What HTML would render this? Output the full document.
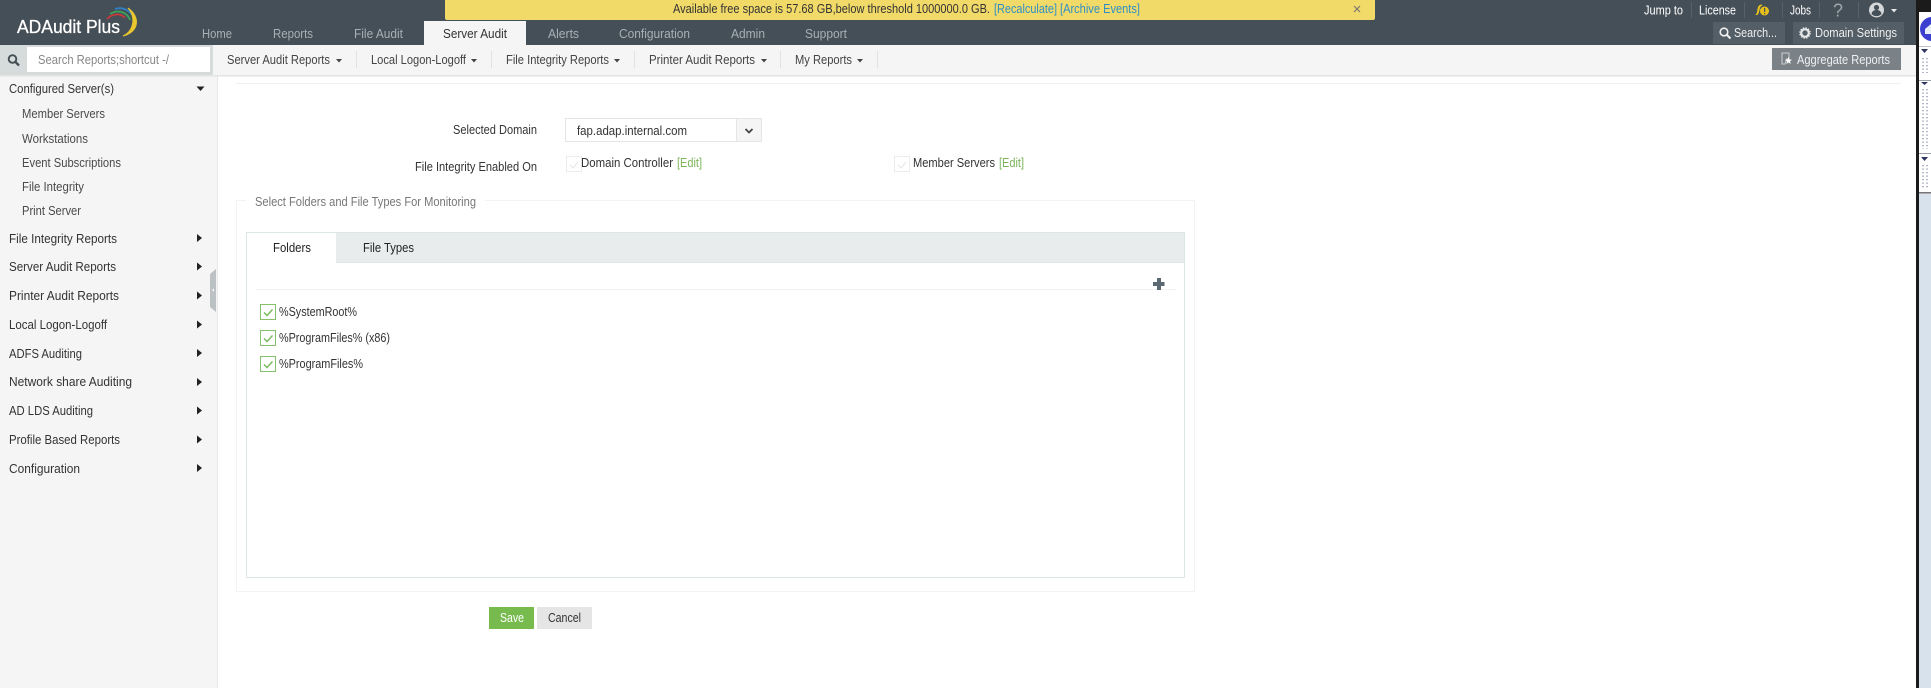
<!DOCTYPE html>
<html>
<head>
<meta charset="utf-8">
<title>ADAudit Plus</title>
<style>
html,body{margin:0;padding:0;background:#fff;width:1931px;height:688px;overflow:hidden}
svg{display:block}
text{font-family:"Liberation Sans",sans-serif;font-size:12px;fill:#3c3c3c;white-space:pre}
.nav{fill:#a8b0b5;font-size:13px}
.top{fill:#fff;font-size:13px}
.btn{fill:#eef0f1;font-size:13px}
.menu{fill:#444;font-size:13px}
.side{fill:#333;font-size:13px}
.sub{fill:#4a4a4a;font-size:13px}
.f{fill:#333;font-size:13px}
.link{fill:#2f8fc4}
.edit{fill:#7cb45a}
</style>
</head>
<body>
<svg xmlns="http://www.w3.org/2000/svg" width="1931" height="688" viewBox="0 0 1931 688">
<rect width="1931" height="688" fill="#fff"/>

<!-- header -->
<rect x="0" y="0" width="1916" height="45" fill="#454f57"/>
<path d="M445 0H1375V18a2 2 0 0 1-2 2H447a2 2 0 0 1-2-2Z" fill="#f2da69"/>
<text x="673" y="13" font-size="12" textLength="317" lengthAdjust="spacingAndGlyphs" style="fill:#333;font-size:12.500px">Available free space is 57.68 GB,below threshold 1000000.0 GB.</text>
<text x="994" y="13" class="link" textLength="63" lengthAdjust="spacingAndGlyphs" style="font-size:12.500px">[Recalculate]</text>
<text x="1060" y="13" class="link" textLength="80" lengthAdjust="spacingAndGlyphs" style="font-size:12.500px">[Archive Events]</text>
<path d="M1354 6l6 6M1360 6l-6 6" stroke="#777" stroke-width="1.200" fill="none"/>

<!-- logo -->
<text x="17" y="33" style="fill:#fff;stroke:#fff;stroke-width:.3px;font-size:18.500px" textLength="103" lengthAdjust="spacingAndGlyphs">ADAudit Plus</text>
<path d="M107 19C113 13 121 13 125 18" stroke="#c8393c" stroke-width="1.800" fill="none"/>
<path d="M110 14C118 9 127 12 130 20" stroke="#3aa35a" stroke-width="1.800" fill="none"/>
<path d="M115 9C124 6 133 12 135 22" stroke="#2f7fc4" stroke-width="1.800" fill="none"/>
<path d="M128 8C140 16 140 32 123 36C134 31 136 17 128 8Z" stroke="#eac62f" stroke-width="1" fill="#eac62f"/>

<!-- nav tabs -->
<rect x="424" y="21" width="102" height="24" fill="#f5f5f5"/>
<text x="202" y="38" class="nav" textLength="30" lengthAdjust="spacingAndGlyphs">Home</text>
<text x="273" y="38" class="nav" textLength="40" lengthAdjust="spacingAndGlyphs">Reports</text>
<text x="354" y="38" class="nav" textLength="49" lengthAdjust="spacingAndGlyphs">File Audit</text>
<text x="443" y="38" class="f" textLength="64" lengthAdjust="spacingAndGlyphs">Server Audit</text>
<text x="548" y="38" class="nav" textLength="31" lengthAdjust="spacingAndGlyphs">Alerts</text>
<text x="619" y="38" class="nav" textLength="71" lengthAdjust="spacingAndGlyphs">Configuration</text>
<text x="731" y="38" class="nav" textLength="34" lengthAdjust="spacingAndGlyphs">Admin</text>
<text x="805" y="38" class="nav" textLength="42" lengthAdjust="spacingAndGlyphs">Support</text>

<!-- top right -->
<text x="1644" y="14.500" class="top" textLength="39" lengthAdjust="spacingAndGlyphs">Jump to</text>
<text x="1699" y="14.500" class="top" textLength="37" lengthAdjust="spacingAndGlyphs">License</text>
<text x="1790" y="14.500" class="top" textLength="21" lengthAdjust="spacingAndGlyphs">Jobs</text>
<g stroke="#57616a" stroke-width="1"><path d="M1691.500 2V18M1744.500 2V18M1782.500 2V18M1819.500 2V18M1858.500 2V18"/></g>
<path d="M1755 15c2-1 2-3 2.500-6 .5-3 2-4.500 4-4.500l1 1c-2 .5-2.500 2-3 4.500-.5 2.500-1 4-2 5Z" fill="#e6bf1c"/>
<circle cx="1764.500" cy="11" r="4.500" fill="#e6bf1c"/>
<rect x="1764" y="8" width="1.200" height="4" fill="#454f57"/><rect x="1764" y="13" width="1.200" height="1.200" fill="#454f57"/>
<text x="1833" y="16.500" style="fill:#a0a7ac;font-size:18px" textLength="10" lengthAdjust="spacingAndGlyphs">?</text>
<circle cx="1876.500" cy="10" r="7.500" fill="#d5d8da"/>
<circle cx="1876.500" cy="7.500" r="2.600" fill="#454f57"/>
<path d="M1871.500 14c.5-3 2.500-4 5-4s4.500 1 5 4a7 7 0 0 1-10 0Z" fill="#454f57"/>
<path d="M1891 9h6l-3 3.500Z" fill="#e8eaeb"/>

<!-- header buttons -->
<rect x="1713" y="22" width="72" height="22" fill="#545e66"/>
<rect x="1793" y="22" width="111" height="22" fill="#545e66"/>
<circle cx="1724" cy="32" r="3.800" fill="none" stroke="#f0f0f0" stroke-width="1.600"/>
<path d="M1727 35l3.500 3.500" stroke="#f0f0f0" stroke-width="2"/>
<text x="1734" y="37" class="btn" textLength="43" lengthAdjust="spacingAndGlyphs">Search...</text>
<circle cx="1805" cy="33" r="3.800" fill="none" stroke="#e6e8e9" stroke-width="2.200"/>
<circle cx="1805" cy="33" r="5.300" fill="none" stroke="#e6e8e9" stroke-width="1" stroke-dasharray="1.500 1.300"/>
<text x="1815" y="37" class="btn" textLength="82" lengthAdjust="spacingAndGlyphs">Domain Settings</text>

<!-- sub bar -->
<rect x="0" y="45" width="1916" height="30" fill="#f5f5f5"/>
<rect x="0" y="75" width="1916" height="1.500" fill="#e4e4e4"/>
<rect x="0" y="45" width="213" height="30" fill="#d6dcdc"/>
<rect x="27" y="47" width="183" height="25" fill="#fff"/>
<circle cx="12.500" cy="59" r="3.800" fill="none" stroke="#444f55" stroke-width="1.900"/>
<path d="M15.500 62l3.500 3.500" stroke="#444f55" stroke-width="2.300"/>
<text x="38" y="64" textLength="131" lengthAdjust="spacingAndGlyphs" style="fill:#878787;font-size:13px">Search Reports;shortcut -/</text>

<text x="227" y="64" class="menu" textLength="103" lengthAdjust="spacingAndGlyphs">Server Audit Reports</text>
<text x="371" y="64" class="menu" textLength="95" lengthAdjust="spacingAndGlyphs">Local Logon-Logoff</text>
<text x="506" y="64" class="menu" textLength="103" lengthAdjust="spacingAndGlyphs">File Integrity Reports</text>
<text x="649" y="64" class="menu" textLength="106" lengthAdjust="spacingAndGlyphs">Printer Audit Reports</text>
<text x="795" y="64" class="menu" textLength="57" lengthAdjust="spacingAndGlyphs">My Reports</text>
<g fill="#444"><path d="M336 59h6l-3 3.500ZM471 59h6l-3 3.500ZM614 59h6l-3 3.500ZM761 59h6l-3 3.500ZM857 59h6l-3 3.500Z"/></g>
<g stroke="#e2e2e2"><path d="M356.500 51V68M491.500 51V68M634.500 51V68M780.500 51V68M877.500 51V68"/></g>

<rect x="1772" y="48" width="129" height="22" fill="#7a8288"/>
<path d="M1782 53h7v6h-2.500l-1.500 5h-3Z" fill="none" stroke="#c9cdd0" stroke-width="1"/>
<path d="M1788.500 57l1 2.500 2.500.2-2 1.600.7 2.700-2.200-1.500-2.200 1.500.7-2.700-2-1.600 2.500-.2Z" fill="#fff"/>
<text x="1797" y="64" class="btn" textLength="93" lengthAdjust="spacingAndGlyphs">Aggregate Reports</text>

<!-- sidebar -->
<rect x="0" y="76.500" width="217" height="611.500" fill="#f5f5f5"/>
<rect x="217" y="76.500" width="1" height="611.500" fill="#e8e8e8"/>
<text x="9" y="93" class="side" textLength="105" lengthAdjust="spacingAndGlyphs">Configured Server(s)</text>
<path d="M196.500 86.500h8l-4 4.500Z" fill="#222"/>
<text x="22" y="118" class="sub" textLength="83" lengthAdjust="spacingAndGlyphs">Member Servers</text>
<text x="22" y="143" class="sub" textLength="66" lengthAdjust="spacingAndGlyphs">Workstations</text>
<text x="22" y="167" class="sub" textLength="99" lengthAdjust="spacingAndGlyphs">Event Subscriptions</text>
<text x="22" y="191" class="sub" textLength="62" lengthAdjust="spacingAndGlyphs">File Integrity</text>
<text x="22" y="215" class="sub" textLength="59" lengthAdjust="spacingAndGlyphs">Print Server</text>

<text x="9" y="243" class="side" textLength="108" lengthAdjust="spacingAndGlyphs">File Integrity Reports</text>
<text x="9" y="271" class="side" textLength="107" lengthAdjust="spacingAndGlyphs">Server Audit Reports</text>
<text x="9" y="300" class="side" textLength="110" lengthAdjust="spacingAndGlyphs">Printer Audit Reports</text>
<text x="9" y="329" class="side" textLength="98" lengthAdjust="spacingAndGlyphs">Local Logon-Logoff</text>
<text x="9" y="358" class="side" textLength="73" lengthAdjust="spacingAndGlyphs">ADFS Auditing</text>
<text x="9" y="386" class="side" textLength="123" lengthAdjust="spacingAndGlyphs">Network share Auditing</text>
<text x="9" y="415" class="side" textLength="84" lengthAdjust="spacingAndGlyphs">AD LDS Auditing</text>
<text x="9" y="444" class="side" textLength="111" lengthAdjust="spacingAndGlyphs">Profile Based Reports</text>
<text x="9" y="473" class="side" textLength="71" lengthAdjust="spacingAndGlyphs">Configuration</text>
<g fill="#222">
<path d="M197 234v8l5-4Z"/><path d="M197 262.500v8l5-4Z"/><path d="M197 291.500v8l5-4Z"/><path d="M197 320.500v8l5-4Z"/><path d="M197 349v8l5-4Z"/><path d="M197 378v8l5-4Z"/><path d="M197 406.500v8l5-4Z"/><path d="M197 435.500v8l5-4Z"/><path d="M197 464v8l5-4Z"/>
</g>
<path d="M216 269V312L210 307V274Z" fill="#bcc1c3"/>
<path d="M214 288.500v3l-2-1.500Z" fill="#fff"/>

<!-- main -->
<rect x="236" y="83" width="1665" height="1" fill="#f0f0f0"/>
<text x="453" y="134" class="f" textLength="84" lengthAdjust="spacingAndGlyphs">Selected Domain</text>
<rect x="565.500" y="118.500" width="196" height="23" fill="#fff" stroke="#e2e6e7"/>
<rect x="736.500" y="118.500" width="25" height="23" fill="#f5f5f5" stroke="#e2e6e7"/>
<path d="M745.500 129l3.500 3.500 3.500-3.500" fill="none" stroke="#444" stroke-width="1.800"/>
<text x="577" y="135" class="f" textLength="110" lengthAdjust="spacingAndGlyphs">fap.adap.internal.com</text>

<text x="415" y="171" class="f" textLength="122" lengthAdjust="spacingAndGlyphs">File Integrity Enabled On</text>
<rect x="566.500" y="156.500" width="15" height="15" fill="#fff" stroke="#ececec"/>
<path d="M570 165l3 3 5-6" fill="none" stroke="#e6e6e6" stroke-width="1"/>
<text x="581" y="167" class="f" textLength="92" lengthAdjust="spacingAndGlyphs">Domain Controller</text>
<text x="677" y="167" class="edit" textLength="25" lengthAdjust="spacingAndGlyphs" style="font-size:13px">[Edit]</text>
<rect x="894.500" y="156.500" width="15" height="15" fill="#fff" stroke="#ececec"/>
<path d="M898 165l3 3 5-6" fill="none" stroke="#e6e6e6" stroke-width="1"/>
<text x="913" y="167" class="f" textLength="82" lengthAdjust="spacingAndGlyphs">Member Servers</text>
<text x="999" y="167" class="edit" textLength="25" lengthAdjust="spacingAndGlyphs" style="font-size:13px">[Edit]</text>

<!-- fieldset -->
<path d="M246 200.500H236.500V591.500H1194.500V200.500H485" fill="none" stroke="#f2f3f3"/>
<text x="255" y="206" textLength="221" lengthAdjust="spacingAndGlyphs" style="fill:#777;font-size:13px">Select Folders and File Types For Monitoring</text>

<!-- tab panel -->
<rect x="246.500" y="232.500" width="938" height="345" fill="#fff" stroke="#dfe6e6"/>
<rect x="247" y="233" width="937" height="29" fill="#e9eced"/>
<rect x="247" y="262" width="937" height="1" fill="#dfe6e6"/>
<rect x="247" y="233" width="89" height="30" fill="#fff"/>
<text x="273" y="252" textLength="38" lengthAdjust="spacingAndGlyphs" style="fill:#222;font-size:13px">Folders</text>
<text x="363" y="252" textLength="51" lengthAdjust="spacingAndGlyphs" style="fill:#222;font-size:13px">File Types</text>

<rect x="256" y="289" width="920" height="1" fill="#f1f2f2"/>
<path d="M1157 278h4v4h3.500v4H1161v4h-4v-4h-4v-4h4Z" fill="#5b6a72"/>

<g fill="#fff" stroke="#86c06a"><rect x="260.500" y="304.500" width="15" height="15"/><rect x="260.500" y="330.500" width="15" height="15"/><rect x="260.500" y="356.500" width="15" height="15"/></g>
<g fill="none" stroke="#7dbb60" stroke-width="1.500"><path d="M264 312.500l3 3 5.500-6"/><path d="M264 338.500l3 3 5.500-6"/><path d="M264 364.500l3 3 5.500-6"/></g>
<text x="279" y="316" class="f" textLength="78" lengthAdjust="spacingAndGlyphs">%SystemRoot%</text>
<text x="279" y="342" class="f" textLength="111" lengthAdjust="spacingAndGlyphs">%ProgramFiles% (x86)</text>
<text x="279" y="368" class="f" textLength="84" lengthAdjust="spacingAndGlyphs">%ProgramFiles%</text>

<!-- buttons -->
<rect x="489" y="607" width="45" height="22" fill="#77bb4e"/>
<rect x="537" y="607" width="55" height="22" fill="#e5e5e5"/>
<text x="500" y="622" textLength="24" lengthAdjust="spacingAndGlyphs" style="fill:#fff;font-size:13px">Save</text>
<text x="548" y="622" textLength="33" lengthAdjust="spacingAndGlyphs" style="fill:#333;font-size:13px">Cancel</text>

<!-- right edge window -->
<rect x="1916" y="0" width="15" height="688" fill="#1b1b1b"/>
<rect x="1919" y="12" width="12" height="181" fill="#fff"/>
<rect x="1919" y="193" width="12" height="495" fill="#d8e2ec"/>
<circle cx="1932" cy="29" r="12" fill="#3a3fd0"/>
<path d="M1925 29l6-5v10h-6Z" fill="#e8eef8"/>
<rect x="1919" y="46" width="12" height="1" fill="#c0c4cc"/>
<rect x="1919" y="80" width="12" height="1" fill="#9aa0aa"/>
<rect x="1919" y="153" width="12" height="1" fill="#9aa0aa"/>
<rect x="1919" y="192" width="12" height="1.500" fill="#777"/>
<g fill="#2e3560"><path d="M1921 49h7l-3.500 4Z"/><path d="M1921 82h7l-3.500 3Z"/><path d="M1921 157h7l-3.500 4Z"/></g>
<g stroke="#7a84a0" stroke-width="1.200" stroke-dasharray="1.200 2.300" fill="none">
<path d="M1923 58V73M1927 58V73M1923 89V149M1927 89V149M1923 165V189M1927 165V189"/>
</g>
</svg>
</body>
</html>
